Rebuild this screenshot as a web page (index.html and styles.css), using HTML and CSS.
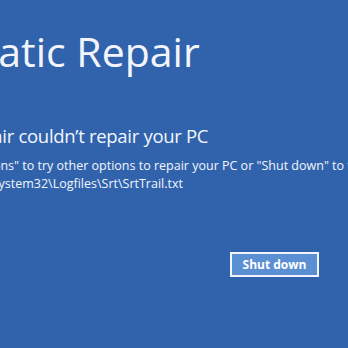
FILE: index.html
```html
<!DOCTYPE html>
<html lang="en">
<head>
<meta charset="utf-8">
<title>Automatic Repair</title>
<link rel="stylesheet" href="styles.css">
</head>
<body>
<main class="screen">
  <h1 class="title">Automatic Repair</h1>
  <h2 class="subtitle">Automatic Repair couldn’t repair your PC</h2>
  <div class="message">
    <p class="line">Press "Advanced options" to try other options to repair your PC or "Shut down" to turn off your PC.</p>
    <p class="line">Log file: C:\Windows\System32\Logfiles\Srt\SrtTrail.txt</p>
  </div>
  <div class="actions">
    <button class="btn btn-primary">Shut down</button>
  </div>
</main>
</body>
</html>
```
FILE: styles.css
```css
html, body {
  margin: 0;
  padding: 0;
  height: 100%;
  overflow: hidden;
  background: #3163ad;
}
.screen {
  margin-left: -130px;
  padding-top: 31px;
  color: #f2f6fc;
  font-family: "Open Sans", "Noto Sans", sans-serif;
  white-space: nowrap;
}
.title {
  margin: 0;
  font-size: 41px;
  font-weight: 400;
  line-height: 1;
}
.subtitle {
  margin: 55px 0 0;
  font-size: 18.5px;
  font-weight: 400;
  letter-spacing: -0.3px;
  line-height: 1;
}
.message {
  margin-top: 11px;
  font-size: 12.5px;
  line-height: 18px;
}
.line {
  margin: 0;
}
.actions {
  display: flex;
  margin-top: 59px;
  padding-left: 360px;
}
.btn {
  box-sizing: border-box;
  height: 25px;
  padding: 0 10px;
  color: #ffffff;
  font-family: "Open Sans", "Noto Sans", sans-serif;
  font-size: 12px;
  font-weight: 700;
}
.btn-primary {
  width: 89px;
  border: 2px solid #f2f6fc;
  background: #5b8fd3;
}
```
